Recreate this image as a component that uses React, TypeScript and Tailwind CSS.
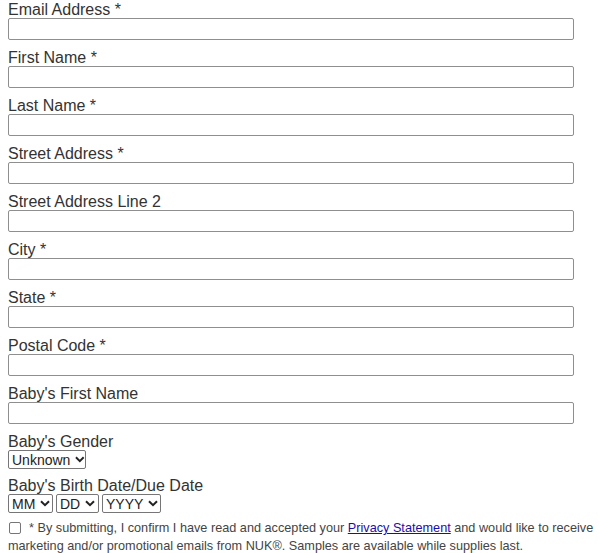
import React from "react";

const fields = [
  "Email Address *",
  "First Name *",
  "Last Name *",
  "Street Address *",
  "Street Address Line 2",
  "City *",
  "State *",
  "Postal Code *",
  "Baby's First Name",
];

function Chevron() {
  return (
    <svg width="10" height="7" viewBox="0 0 10 7" className="ml-[5px]">
      <path d="M1 1.2 L5 5.2 L9 1.2" fill="none" stroke="#222" strokeWidth="2" />
    </svg>
  );
}

function FakeSelect({ label, width }: { label: string; width: string }) {
  return (
    <div
      className={`flex h-[19px] items-center rounded-[2px] border border-[#767676] bg-white pl-[3px] text-[14px] leading-none text-[#222] ${width}`}
    >
      <span>{label}</span>
      <Chevron />
    </div>
  );
}

export default function App() {
  return (
    <div className="min-h-[553px] overflow-hidden bg-white px-2 pt-px font-['Liberation_Sans',Arial,sans-serif] text-[#333]">
      {fields.map((f) => (
        <div key={f} className="flex h-[48px] flex-col">
          <label className="h-[17px] text-[16px] leading-[17px]">{f}</label>
          <div className="h-[22px] w-[566px] rounded-[2px] border border-[#8f8f8f] bg-white"></div>
        </div>
      ))}
      <div className="flex h-[44px] flex-col">
        <label className="h-[17px] text-[16px] leading-[17px]">Baby's Gender</label>
        <FakeSelect label="Unknown" width="w-[78px]" />
      </div>
      <div className="flex flex-col">
        <label className="h-[17px] text-[16px] leading-[17px]">Baby's Birth Date/Due Date</label>
        <div className="flex gap-[3px]">
          <FakeSelect label="MM" width="w-[45px]" />
          <FakeSelect label="DD" width="w-[43px]" />
          <FakeSelect label="YYYY" width="w-[59px]" />
        </div>
      </div>
      <div className="mt-[6px] w-[640px] text-[12.7px] leading-[18px] text-[#444]">
        <div className="flex items-center whitespace-nowrap">
          <span className="mr-[8px] ml-px h-[12px] w-[12px] shrink-0 rounded-[2px] border border-[#767676] bg-white"></span>
          <span>
            * By submitting, I confirm I have read and accepted your{" "}
            <a className="text-[#1a0dab] underline">Privacy Statement</a> and would like to receive
          </span>
        </div>
        <div className="whitespace-nowrap">
          marketing and/or promotional emails from NUK®. Samples are available while supplies last.
        </div>
      </div>
    </div>
  );
}
